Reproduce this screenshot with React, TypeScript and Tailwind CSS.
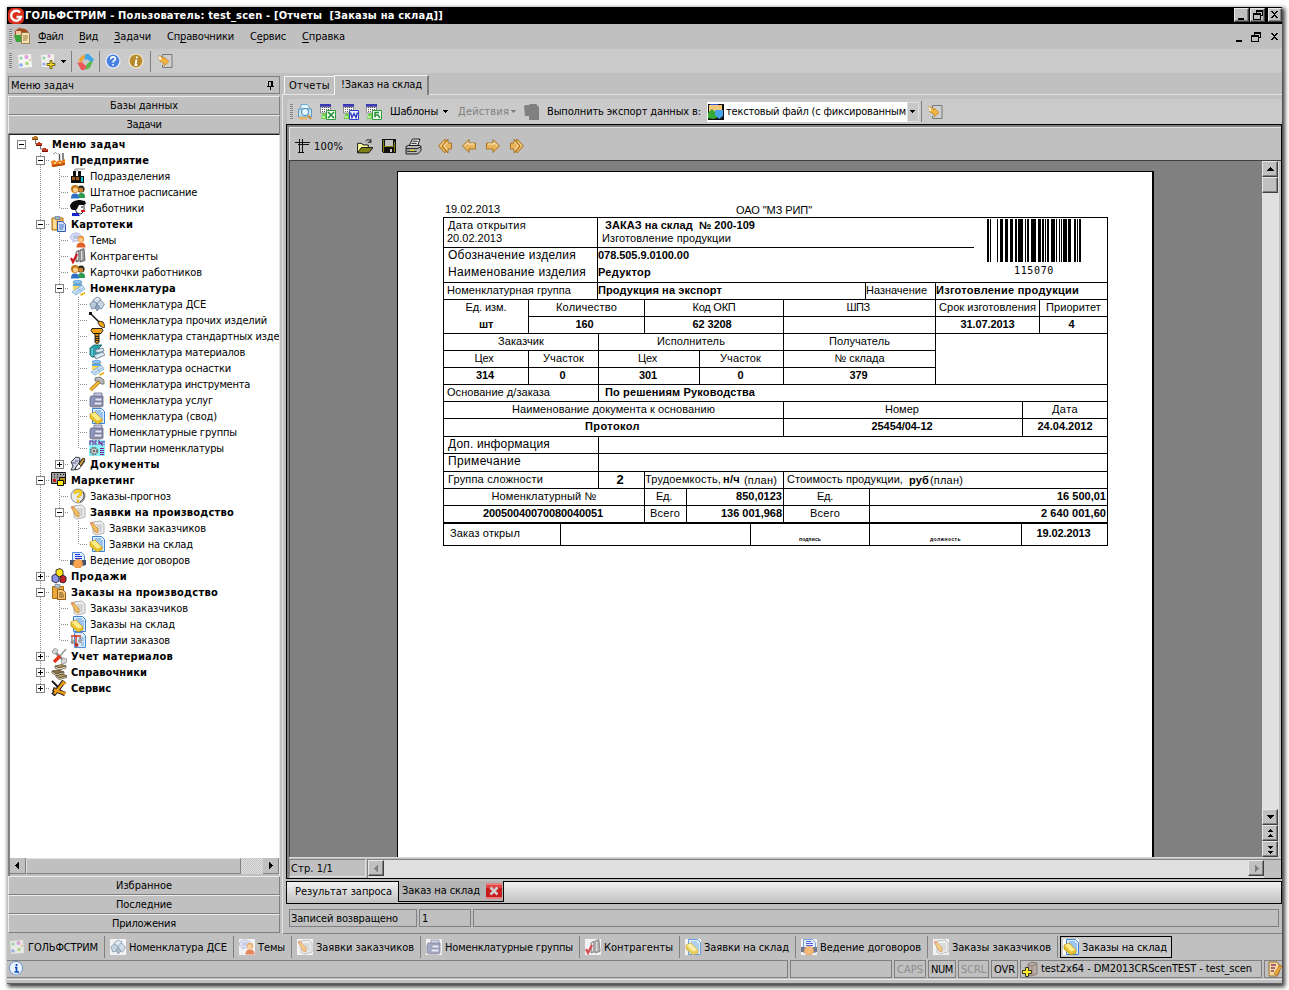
import { useLayoutEffect, useRef, type ReactNode } from "react";

/* ---------- text ---------- */

function T({ w, className = "", children }: { w: number; className?: string; children: ReactNode }) {
  const ref = useRef<HTMLSpanElement>(null);
  useLayoutEffect(() => {
    const el = ref.current;
    if (!el) return;
    el.style.letterSpacing = "0px";
    const natural = el.getBoundingClientRect().width;
    const count = (el.textContent ?? "").length || 1;
    el.style.letterSpacing = ((w - natural) / count).toFixed(3) + "px";
  }, [w]);
  return (
    <span ref={ref} className={"inline-block shrink-0 whitespace-pre " + className}>
      {children}
    </span>
  );
}

/* ---------- icons ---------- */

const sheet = (
  <g>
    <path d="M0 0h11v3H0z" fill="#3a3ab8" />
    <path d="M.5 3h10v6H.5z" fill="#fff" stroke="#8a8a8a" />
    <path d="M2.500 3v6M4.500 3v6M6.500 3v6M8.500 3v6" stroke="#555" strokeDasharray="1 1" />
    <path d="M3 9l4 1v5H1l1-4z" fill="#6cd048" />
    <path d="M2 12h3v2H2z" fill="#b4f09c" />
  </g>
);

const art: Record<string, ReactNode> = {
  flow: (
    <g>
      <path d="M3.500 4v4H6M8.500 9v4H11" fill="none" stroke="#777" />
      <path d="M0 1h6v3H0zM2 0h3v1H2z" fill="#b97a2c" />
      <path d="M4 7h6v3H4zM6 6h2v1H6zM10 13h6v3h-6zM11 12h3v1h-3z" fill="#c53a20" />
      <path d="M4 9.500h6M10 15.500h6" stroke="#7a1608" />
      <path d="M0 3.500h6" stroke="#7c4a0c" />
    </g>
  ),
  plant: (
    <g>
      <path d="M2 1l2 1M4 0l2 2M8 1L7 2" stroke="#999" />
      <path d="M8.500 2v7M12 1v8" stroke="#555" strokeWidth="1.400" />
      <path d="M0 9l4-1 1 2 4-2 1 1 4-2v6l-13 2z" fill="#ef7a1c" />
      <path d="M1 13l13-2v2L2 15z" fill="#b84c05" />
      <path d="M3 10.500h2v1.500H3zM8 10h2v1.500H8z" fill="#ffe28a" />
    </g>
  ),
  factory: (
    <g>
      <path d="M5 1h10M4 2h4" stroke="#c4c4c4" strokeWidth="2" />
      <path d="M3 3h3v5h2V3h3v5h3v7H1V8h2z" fill="#111" />
      <path d="M2 9h3v3H2zM6 9h3v3H6z" fill="#a45a12" />
      <path d="M11 9h2v5h-2z" fill="#0cc7d6" />
    </g>
  ),
  people: (
    <g>
      <circle cx="11" cy="5" r="3.600" fill="#2b2b1c" />
      <circle cx="11" cy="6" r="2.300" fill="#c98432" />
      <path d="M8 14c0-4 1-5 3.500-5S15 10 15 14z" fill="#2d9b50" />
      <circle cx="5" cy="5" r="4" fill="#c07b16" />
      <circle cx="5.500" cy="6" r="2.500" fill="#ffd08a" />
      <path d="M1 14.500c0-4 1.500-5 4-5s4 1 4 5z" fill="#2f6fc8" />
    </g>
  ),
  worker: (
    <g>
      <path d="M7 4h7v7l-3 3-4-1-2-4z" fill="#fff" stroke="#000" strokeWidth=".8" />
      <path d="M0 6C1 2 5 0 10 0l5 1 1 3-3 1-4 0-2 4-1 1H3L1 9z" fill="#0a0a0a" />
      <path d="M11 10h4v2h-4z" fill="#e01818" />
      <path d="M2 13h6l2 3H2z" fill="#1623c8" />
      <path d="M11 7h2" stroke="#000" />
    </g>
  ),
  clipboard: (
    <g>
      <path d="M1 2h11v12H1z" fill="#f5b551" stroke="#b06c12" />
      <path d="M2 3h3v10H2z" fill="#ffdc98" />
      <path d="M4 .5h5V3.500H4z" fill="#9fb2c8" stroke="#65788e" strokeWidth=".7" />
      <path d="M6.500 5.500h5l3 3v7h-8z" fill="#cfe0fb" stroke="#3458a8" />
      <path d="M8 9h5M8 11h5M8 13h4" stroke="#4a70c0" />
    </g>
  ),
  theme: (
    <g>
      <ellipse cx="6" cy="5" rx="5.500" ry="4" fill="#dfe3f6" stroke="#a9b2dc" />
      <path d="M3 8l-1 3 4-2z" fill="#c3caea" />
      <path d="M3 4h6M3 6h5" stroke="#9aa5d8" />
      <circle cx="11" cy="7" r="3.200" fill="#e8963c" />
      <circle cx="10.700" cy="7.700" r="2.200" fill="#ffc98c" />
      <path d="M6.500 15.500c0-4 2-5 4.500-5s4.500 1 4.500 5z" fill="#e4602a" />
    </g>
  ),
  agents: (
    <g>
      <path d="M6 4l3-2v11l-3 1zM10 2l4-1.500 1 12-5 1.500z" fill="#9a9a9a" stroke="#555" strokeWidth=".8" />
      <path d="M7.500 4v8M11.500 3v9" stroke="#dedede" strokeWidth="1.400" />
      <path d="M1 10l2 4 4-8" fill="none" stroke="#cf1722" strokeWidth="2.200" />
    </g>
  ),
  nomen: (
    <g>
      <path d="M3 2h9v8H3z" fill="#ffd75a" />
      <ellipse cx="7.500" cy="2" rx="4.500" ry="1.600" fill="#8cc8ff" stroke="#3f85c8" strokeWidth=".7" />
      <path d="M3 4h9v2H3z" fill="#5aa5e8" />
      <path d="M2 12l10-7 3 4-9 6z" fill="#d3e6f7" stroke="#6ea2cf" strokeWidth=".8" />
      <path d="M5 13l8-5M8 8l3 4" stroke="#8cb8de" />
      <path d="M10 14l5-2v2l-4 2z" fill="#e9b72b" />
    </g>
  ),
  dse: (
    <g stroke="#68809a" strokeWidth=".8">
      <path d="M4 4l4-3 4 2-1 4-4 1z" fill="#dce6f0" />
      <path d="M.8 8l3-3 4 2-1 5-4 1z" fill="#b8c8d8" />
      <path d="M8 8l3-4 4.500 4-3 5-4-1z" fill="#c9d6e3" />
      <path d="M6 11l3-2 2 3-3 3z" fill="#93a9c0" />
    </g>
  ),
  screw: (
    <g>
      <path d="M1 1l10 10" stroke="#111" strokeWidth="1.400" />
      <path d="M0 0h3v3H0z" fill="#111" />
      <path d="M10 9l4 1 2 4-1 2-4-2-2-3z" fill="#f0a41a" stroke="#111" strokeWidth=".8" />
    </g>
  ),
  bolt: (
    <g>
      <path d="M3 .5h10l1 2-2 3H4l-2-3z" fill="#f0a41a" stroke="#111" strokeWidth=".9" />
      <path d="M6 5.500h4v9l-2 1-2-1z" fill="#d98a10" stroke="#111" strokeWidth=".9" />
      <path d="M6 8.500h4M6 10.500h4M6 12.500h4" stroke="#111" strokeWidth=".8" />
    </g>
  ),
  material: (
    <g>
      <path d="M1 4l4-3h8l-3 3v9H3l-2-2z" fill="#2ba0a8" stroke="#0b5660" strokeWidth=".8" />
      <path d="M6 6l8-2 1 3-7 2zM5 11l9-3 2 3-9 4z" fill="#dbe9f2" stroke="#60788c" strokeWidth=".8" />
      <path d="M3 4v8" stroke="#8de4e8" />
    </g>
  ),
  hammer: (
    <g>
      <path d="M1.500 14L11 5" stroke="#a86c0a" strokeWidth="3.600" />
      <path d="M1.500 14L11 5" stroke="#f2c032" strokeWidth="2.200" />
      <path d="M6 2l5-1 4 3v4h-3l-2-3H6z" fill="#b9b9b9" stroke="#666" strokeWidth=".8" />
    </g>
  ),
  service: (
    <g>
      <path d="M5 1h8v4H5z" fill="#c9cde0" stroke="#666c90" strokeWidth=".8" />
      <path d="M2 4h12v10l-2 1H3l-2-1V6z" fill="#8f95b8" stroke="#5d628a" strokeWidth=".8" />
      <path d="M6 6h7v3H6zM5 10h8v3H5z" fill="#e2e5f2" stroke="#6a6f94" strokeWidth=".7" />
      <path d="M2 14.500h11" stroke="#8b8b90" />
    </g>
  ),
  svod: (
    <g>
      <path d="M3.500.5h9l3 3v12h-12z" fill="#dcecfc" stroke="#3b82cf" />
      <path d="M6 3h6M6 5h8M8 7h6M10 9h4M12 11h2" stroke="#5d9ee0" />
      <path d="M1 6l5-2 7 7v3l-5 2-7-6z" fill="#e8c22e" stroke="#b98d12" strokeWidth=".7" />
      <path d="M1.500 6l4.500-1.500 6.500 6.500-4.500 1.500z" fill="#fdee8c" />
    </g>
  ),
  parts: (
    <g>
      <path d="M0 0h16v16H0z" fill="#8af4f8" />
      <path d="M1 5V1h3v4M8 1H6v3h2M10 5V1l3 4V1M15 1v2M15 4v1" fill="none" stroke="#7a1e96" strokeWidth="1.100" />
      <circle cx="5" cy="11" r="3.300" fill="#ddd" stroke="#6f7a80" strokeWidth="2" strokeDasharray="2 .6" />
      <circle cx="5" cy="11" r="1.300" fill="#666" />
      <path d="M11 8.500h4M11 10.500h4M11 12.500h4M11 14.500h4" stroke="#7a1e96" />
    </g>
  ),
  docs: (
    <g stroke="#111" strokeWidth=".8">
      <path d="M1 6l5-5 4 1-1 6-5 6H1l2-4z" fill="#cdd2ea" />
      <path d="M6 11l6-8 3 2-6 8-4 1z" fill="#fff" />
      <path d="M9 8l4-6 2 1-4 7z" fill="#d8a13a" />
      <path d="M2 7h4M5 5h3" stroke="#445" />
    </g>
  ),
  market: (
    <g>
      <path d="M.5.5h14v11H.5z" fill="#a0a0a0" stroke="#111" />
      <path d="M3 2.500h1M6 2.500h1M9 2.500h1M12 2.500h1M3 5h1M6 5h1" stroke="#111" />
      <path d="M2 7h3v3H2z" fill="#d81414" />
      <path d="M8.500 5.500h6v6h-6z" fill="#b98e12" stroke="#111" />
      <path d="M6.500 8.500h6v5h-6z" fill="#ffec19" stroke="#111" />
    </g>
  ),
  question: (
    <g>
      <circle cx="8" cy="8" r="7" fill="#ececec" stroke="#8b8b8b" />
      <path d="M13 4a7 7 0 0 1-3 10" fill="none" stroke="#333" />
      <path d="M5 6c0-4 6-4 6-.8C11 7.500 8 7.500 8 10" fill="none" stroke="#c89406" strokeWidth="2.600" />
      <path d="M5 6c0-4 6-4 6-.8C11 7.500 8 7.500 8 10" fill="none" stroke="#ffdc1c" strokeWidth="1.600" />
      <circle cx="8" cy="13" r="1.400" fill="#f2c20e" />
    </g>
  ),
  request: (
    <g>
      <path d="M4 2l8-1 3 3v9l-8 2-3-2z" fill="#efefef" stroke="#b0b0b0" />
      <path d="M7 5h6M8 7h5M9 9h4M10 11h3" stroke="#b8b8b8" />
      <path d="M1 3l2-1 6 7 0 4-3-1z" fill="#f6bd62" stroke="#bd7f2c" strokeWidth=".7" />
      <path d="M1 3l2-1 1 1.500-2 1z" fill="#e98b8b" />
    </g>
  ),
  contract: (
    <g>
      <path d="M2.500.5h9l3 3v10h-12z" fill="#e4efff" stroke="#4f86d8" />
      <path d="M5 2.500h5M5 4.500h7M5 6.500h7" stroke="#1c2fe0" />
      <path d="M0 8h5v5H0zM12 8h4v5h-4z" fill="#47536a" />
      <path d="M4 9l4-2 4 2 1 4-3 3H6l-3-3z" fill="#f7a552" stroke="#d07820" strokeWidth=".6" />
    </g>
  ),
  sales: (
    <g stroke="#111" strokeWidth=".8">
      <path d="M5 2l4-1.500 3 2v5L8 9 5 7z" fill="#ffe11c" />
      <path d="M1 8l3-2 4 3v4l-3 2-4-2z" fill="#8b93e8" />
      <path d="M9 9l3-2 3 2v4l-2 2-4-1z" fill="#c5202c" />
    </g>
  ),
  orders: (
    <g>
      <path d="M1.500 2.500h11v12h-11z" fill="#eda93c" stroke="#a86a14" />
      <path d="M4 .5h5V4H4z" fill="#b4c0cc" stroke="#71808e" strokeWidth=".7" />
      <path d="M6.500 5.500h5l3 3v7h-8z" fill="#f4c878" stroke="#94580e" />
      <path d="M8 9h4M8 11h5M8 13h5" stroke="#7f4e10" />
    </g>
  ),
  batch: (
    <g>
      <path d="M4.500.5h8l3 3v12h-11z" fill="#dcecfc" stroke="#4c8fd8" />
      <path d="M10 6h4M10 8h4M11 11h3M11 13h3" stroke="#6f9fd6" />
      <path d="M1 4h10M6 3v10" stroke="#d4311f" strokeWidth="1.300" />
      <path d="M2 5v4M10 5v4" stroke="#555" />
      <circle cx="2.500" cy="10" r="2" fill="#9a9a9a" />
      <circle cx="6.500" cy="13" r="2" fill="#b23a2c" />
      <circle cx="10" cy="9" r="2" fill="#a5a5a5" />
    </g>
  ),
  tools: (
    <g>
      <path d="M2 2l12 12" stroke="#8f8f8f" strokeWidth="2.600" />
      <path d="M1 4l3-4 3 2-1 3-3 1zM10 13l2-3 4 1-1 4-4 1z" fill="#d8d8d8" stroke="#8a8a8a" strokeWidth=".7" />
      <path d="M15 1L9 8" stroke="#999" strokeWidth="1.600" />
      <path d="M9 8l-6 6" stroke="#e8351c" strokeWidth="3.400" />
    </g>
  ),
  books: (
    <g stroke="#4a3c22" strokeWidth=".7">
      <path d="M5 11l7-1 4 2-8 2z" fill="#b79a5a" />
      <path d="M5 11v2l3 2.500 8-2V12l-8 2z" fill="#f6f0dc" />
      <path d="M1 7l7-1 5 2-8 2z" fill="#8a7442" />
      <path d="M1 7v2l4 2.500 8-2V8l-8 2z" fill="#f6f0dc" />
      <path d="M4 2l7-1.500 4 1.500-7 2z" fill="#b79a5a" />
      <path d="M4 2v2l4 2 7-2V2L8 4z" fill="#f6f0dc" />
    </g>
  ),
  gear: (
    <g>
      <path d="M1 1l8 8" stroke="#111" strokeWidth="1.800" />
      <path d="M13 1L8 8l-6 7M2 9l12 5" stroke="#111" strokeWidth="4.400" />
      <path d="M13 1.500L8 8l-5 6M3 9.500l10 4" stroke="#ec9a1c" strokeWidth="2.600" />
      <path d="M11 2l2 2 2-1M12 12l2 1-1 2" fill="none" stroke="#ec9a1c" strokeWidth="1.600" />
    </g>
  ),
  dots: (
    <g>
      <path d="M1 2l13-1 1 13-13 1z" fill="#f4f4f0" />
      <circle cx="4" cy="5" r="1.500" fill="#8cd0a0" />
      <circle cx="9.500" cy="4" r="2" fill="#e39be0" />
      <circle cx="4" cy="12" r="1.800" fill="#8aaaf0" />
      <circle cx="10" cy="10.500" r="1.800" fill="#a8dc7c" />
      <circle cx="13" cy="7" r="1" fill="#d8c080" />
    </g>
  ),
  dotsAdd: (
    <g>
      <path d="M1 2l13-1 0 7-5 6-7 0z" fill="#f1f1ec" />
      <circle cx="4" cy="5" r="1.500" fill="#8cd0a0" />
      <circle cx="9" cy="3" r="1.600" fill="#e39be0" />
      <circle cx="4" cy="11" r="1.500" fill="#8aaaf0" />
      <path d="M10 7.500h2v3h3v2h-3v3h-2v-3H7v-2h3z" fill="#f4dc2c" stroke="#6d5a08" strokeWidth=".9" />
    </g>
  ),
  cycle: (
    <g>
      <path d="M1 7l4-5 5 0-5 5v3z" fill="#f2a23a" />
      <path d="M8 1h3l5 5-2 3-4-3H7z" fill="#3fa8e8" />
      <path d="M15 8l-3 6-4 2 0-4 4-4z" fill="#58b84a" />
      <path d="M0 9l5 0 4 4-2 3-3 0z" fill="#ee5858" />
    </g>
  ),
  help: (
    <g>
      <circle cx="8" cy="8" r="7" fill="#4a80e0" stroke="#e8f0ff" strokeWidth="1.200" />
      <path d="M5.800 6.200c0-3 4.600-3 4.600-.4C10.400 7.500 8 7.500 8 9.500M8 11v1.500" fill="none" stroke="#fff" strokeWidth="1.600" />
    </g>
  ),
  info: (
    <g>
      <circle cx="8" cy="8" r="7" fill="#b88a2c" stroke="#f4ead0" strokeWidth="1.200" />
      <path d="M8.800 3.500v1.800M8.500 6.500l-1 5.500h1.800" fill="none" stroke="#fff" strokeWidth="1.800" />
    </g>
  ),
  exit: (
    <g>
      <path d="M5.500 4V1.500h9.500v13H5.500V12" fill="#cfcfcf" stroke="#777" />
      <path d="M1 3l3 0 3 3V4l5 4.500L7 13v-3L3 8z" fill="#f5b640" stroke="#b98120" strokeWidth=".7" />
      <path d="M1 3l3 1 0 3-1.500 0z" fill="#f8f4ea" />
    </g>
  ),
  preview: (
    <g>
      <path d="M4 .5h6l2 2v6H4z" fill="#eaf6ff" stroke="#4aa0c8" strokeWidth=".8" />
      <path d="M1.500 5h13v8h-13z" fill="#c4e4f4" stroke="#468cae" strokeWidth=".8" />
      <path d="M2 13h8v2.500H2z" fill="#e8b060" />
      <circle cx="8" cy="8" r="3.600" fill="#e6f7ff" stroke="#3f87b4" />
      <path d="M11 11l3 4" stroke="#d08830" strokeWidth="2" />
    </g>
  ),
  xls: (
    <g>
      {sheet}
      <path d="M6.500 6.500h9v9h-9z" fill="#f4fff4" stroke="#2d9a3c" />
      <path d="M8 8l6 6M14 8l-6 6" stroke="#218c34" strokeWidth="1.600" />
    </g>
  ),
  doc: (
    <g>
      {sheet}
      <path d="M6.500 6.500h9v9h-9z" fill="#f4f4ff" stroke="#3040c8" />
      <path d="M7.500 8.500l1.500 5 2-4 2 4 1.500-5" fill="none" stroke="#2030c0" strokeWidth="1.300" />
    </g>
  ),
  txt: (
    <g>
      {sheet}
      <path d="M6.500 6.500h9v9h-9z" fill="#f4fff4" stroke="#2d9a3c" />
      <path d="M13 8.500H9v5M9 11h3l2 3" fill="none" stroke="#218c34" strokeWidth="1.400" />
    </g>
  ),
  blob: <path d="M0 2l2-1h3l1-1h6l3 3v13H5v-4H1z" fill="#808080" />,
  picture: (
    <g>
      <path d="M0 0h16v16H0z" fill="#111" />
      <path d="M1 1h13v9H1z" fill="#f1c87a" />
      <path d="M2 0h8v1H2z" fill="#3a55d8" />
      <path d="M0 9l4-4 4 4 1 5-4 1-5-1z" fill="#38a834" />
      <path d="M7 6h8v6l-4 3-4-4z" fill="#48a4e8" />
    </g>
  ),
  zoomCross: (
    <g stroke="#111" fill="none" shapeRendering="crispEdges">
      <path d="M4.500 1v13M7.500 1v13M0 4.500h15M3 6.500h11M3 14.500h6" />
    </g>
  ),
  open: (
    <g stroke="#111" strokeWidth=".9">
      <path d="M1.500 14V5h4l1 1.500h5V9" fill="#ffffa0" />
      <path d="M1.500 14L5 9h11l-4 5z" fill="#808018" />
      <path d="M9 3c2-2 4-2 5 1M14 1v3h-3" fill="none" />
    </g>
  ),
  save: (
    <g shapeRendering="crispEdges">
      <path d="M1 1h14v14H2l-1-1z" fill="#111" />
      <path d="M4 2h8v6H4z" fill="#c4c4c4" />
      <path d="M2 2h1v12H2zM13 4h1v10h-1zM3 8h10v1H3z" fill="#808018" />
      <path d="M9 11h2v3H9z" fill="#c8c8c8" />
    </g>
  ),
  print: (
    <g stroke="#111" strokeWidth=".9">
      <path d="M4 7l3-6h7l-2 6z" fill="#fff" />
      <path d="M7 3h5M6 5h5" />
      <path d="M1 8l2-1h11l1 1v4l-3 3H1z" fill="#b8b8b8" />
      <path d="M1 10h11l3-2M2 12.500h9" fill="none" />
      <path d="M5 11.500h4" stroke="#e8e020" strokeWidth="1.200" />
    </g>
  ),
  first: (
    <g fill="#e9b35a" stroke="#9a6412" strokeWidth=".8">
      <path d="M11 1L5 8l6 7V11h3.500V5H11z" />
      <path d="M8 1L1.500 8 8 15l1-2-4-5 4-5z" />
      <path d="M10.500 4L7 8l3.500 4M7 4L3.500 8" fill="none" stroke="#fff0cc" />
    </g>
  ),
  prev: (
    <g>
      <path d="M1.500 8l6.500-6.500V5h6.500v6H8v3.500z" fill="#e9b35a" stroke="#9a6412" strokeWidth=".8" />
      <path d="M3.500 8L7 4.500V6h6" fill="none" stroke="#fff0cc" />
    </g>
  ),
  dbAdd: (
    <g>
      <path d="M6 3l4-2 5 1v11l-5 2-4-1z" fill="#b9a9a0" stroke="#776a64" strokeWidth=".8" />
      <path d="M10 4v10M6 4l4 1 5-2" fill="none" stroke="#8f827c" />
      <path d="M3.500 6.500h3v3h3v3h-3v3h-3v-3h-3v-3h3z" fill="#ffee2a" stroke="#222" strokeWidth=".9" />
    </g>
  ),
  note: (
    <g>
      <path d="M3 1h8l2 2v9l-2 3H3z" fill="#f3d896" stroke="#94642c" strokeWidth=".9" />
      <path d="M5 4h5M5 7h4M5 10h3" stroke="#8c3c78" strokeWidth="1.300" />
      <path d="M8 13l6-9 2 1-5 9z" fill="#f0a63a" stroke="#9c5c12" strokeWidth=".6" />
    </g>
  ),
  bubble: (
    <g>
      <circle cx="8" cy="7" r="6.600" fill="#e9f2ff" stroke="#6d93c4" />
      <path d="M5 13l3 3 2-3z" fill="#a9c2e2" />
      <path d="M8.500 3v2M7 6.500h1.500V11M6.500 11H11" fill="none" stroke="#0c46b8" strokeWidth="1.700" />
    </g>
  ),
  app: (
    <g>
      <path d="M1 3l4-3 6 1 3 2v5H1z" fill="#a04c20" />
      <path d="M0 7h7v7H2z" fill="#3da43a" />
      <path d="M2 3h5v4H2z" fill="#f3c9a0" />
      <path d="M7.500 4.500h7l1 2v9h-8z" fill="#f2e2b8" stroke="#8d6b28" strokeWidth=".8" />
      <path d="M9 8h5M9 10h5M9 12h4" stroke="#9a7a34" />
    </g>
  ),
};

function Icon({ n, flip = false, className = "h-4 w-4" }: { n: string; flip?: boolean; className?: string }) {
  return (
    <svg viewBox="0 0 16 16" className={"h-4 w-4 shrink-0 " + (flip ? "-scale-x-100 " : "") + className}>
      {art[n]}
    </svg>
  );
}

function Tri({ dir, className = "" }: { dir: "up" | "down" | "left" | "right"; className?: string }) {
  const d = {
    up: "M4 2h1v1h1v1h1v1h1v1H1V5h1V4h1V3h1z",
    down: "M1 2h7v1H7v1H6v1H5v1H4V5H3V4H2V3H1z",
    left: "M6 1v7H5V7H4V6H3V5H2V4h1V3h1V2h1V1z",
    right: "M3 1v7h1V7h1V6h1V5h1V4H6V3H5V2H4V1z",
  }[dir];
  return (
    <svg viewBox="0 0 9 9" className={"h-[9px] w-[9px] shrink-0 " + className} shapeRendering="crispEdges">
      <path d={d} fill="currentColor" />
    </svg>
  );
}

// Small arrow of a drop-down button: five pixels wide, three high.
function Drop({ className = "" }: { className?: string }) {
  return (
    <svg viewBox="0 0 5 3" className={"h-[3px] w-[5px] shrink-0 " + className} shapeRendering="crispEdges">
      <path d="M0 0h5v1H4v1H3v1H2V2H1V1H0z" fill="currentColor" />
    </svg>
  );
}

const raised =
  "flex shrink-0 items-center justify-center border border-t-[#e8e8e8] border-l-[#e8e8e8] border-r-[#404040] border-b-[#404040] bg-[#c0c0c0] shadow-[inset_-1px_-1px_0_#808080]";

function Grip() {
  return <div className="h-4 w-[3px] shrink-0 bg-[repeating-linear-gradient(180deg,#808080_0_1px,#d0d0d0_1px_2px)]" />;
}

function Sep({ className = "" }: { className?: string }) {
  return <div className={"w-px shrink-0 bg-[#808080] " + className} />;
}

/* ---------- window frame ---------- */

const glyph = {
  min: "M2 9h6v2H2z",
  restore: "M4 1h7v6H9v4H1V4h3zM5 3v1h4v2h1V3zM2 6v4h6V6z",
  close: "M2 2h2v1h1v1h1V3h1V2h2v1H8v1H7v1H6v1h1v1h1v1h1v1H7V8H6V7H5v1H4v1H2V8h1V7h1V6h1V5H4V4H3V3H2z",
};

function Glyph({ k }: { k: keyof typeof glyph }) {
  return (
    <svg viewBox="0 0 12 12" className="h-3 w-3 shrink-0" shapeRendering="crispEdges">
      <path d={glyph[k]} fillRule="evenodd" fill="#000" />
    </svg>
  );
}

function TitleBar() {
  return (
    <div className="flex h-[17px] shrink-0 items-center bg-black text-white">
      <svg viewBox="0 0 16 16" className="ml-[1px] h-4 w-4 shrink-0">
        <rect width="16" height="16" rx="5" fill="#d8301c" />
        <path d="M12 4.500A5 5 0 1 0 13 9H8.500" fill="none" stroke="#fff" strokeWidth="2.400" />
      </svg>
      <T w={418} className="ml-[1px] font-bold">
        ГОЛЬФСТРИМ - Пользователь: test_scen - [Отчеты  [Заказы на склад]]
      </T>
      <div className="mt-[1px] ml-auto flex self-start">
        <div className={raised + " h-[14px] w-[15px] overflow-hidden"}><Glyph k="min" /></div>
        <div className={raised + " ml-px h-[14px] w-[15px] overflow-hidden"}><Glyph k="restore" /></div>
        <div className={raised + " ml-[3px] h-[14px] w-[14px] overflow-hidden"}><Glyph k="close" /></div>
      </div>
    </div>
  );
}

const menu: [string, string, string, number][] = [
  ["", "Ф", "айл", 25],
  ["", "В", "ид", 19],
  ["", "З", "адачи", 37],
  ["Сп", "р", "авочники", 67],
  ["С", "е", "рвис", 36],
  ["", "С", "правка", 43],
];

function MenuBar() {
  return (
    <div className="flex h-[25px] shrink-0 items-center pl-[2px]">
      <Grip />
      <Icon n="app" className="mr-[8px] ml-[2px] -translate-y-px" />
      {menu.map(([a, u, b, w]) => (
        <T key={u + b} w={w} className="mr-4 pt-[1px]">
          {a}
          <span className="underline underline-offset-2">{u}</span>
          {b}
        </T>
      ))}
      <div className="ml-auto flex gap-[4px] pr-[1px]">
        <Glyph k="min" />
        <Glyph k="restore" />
        <span className="ml-[3px] flex"><Glyph k="close" /></span>
      </div>
    </div>
  );
}

function MainToolbar() {
  return (
    <div className="flex h-6 shrink-0 items-center bg-[#cacaca] pl-[2px]">
      <Grip />
      <Icon n="dots" className="ml-[5px]" />
      <Icon n="dotsAdd" className="ml-[7px]" />
      <Drop className="ml-[5px]" />
      <Sep className="mr-[5px] ml-[5px] h-[21px]" />
      <Icon n="cycle" className="h-[17px] w-[17px]" />
      <Sep className="mr-[5px] ml-[5px] h-[21px]" />
      <Icon n="help" />
      <Icon n="info" className="ml-[7px]" />
      <Sep className="mr-[6px] ml-[6px] h-[21px]" />
      <Icon n="exit" />
    </div>
  );
}

/* ---------- task tree ---------- */

type Node = { t: string; w: number; i: string; b?: boolean; open?: boolean; kids?: Node[] };

const tree: Node[] = [
  { t: "Предприятие", w: 78, i: "plant", b: true, open: true, kids: [
    { t: "Подразделения", w: 80, i: "factory" },
    { t: "Штатное расписание", w: 107, i: "people" },
    { t: "Работники", w: 54, i: "worker" },
  ] },
  { t: "Картотеки", w: 62, i: "clipboard", b: true, open: true, kids: [
    { t: "Темы", w: 26, i: "theme" },
    { t: "Контрагенты", w: 68, i: "agents" },
    { t: "Карточки работников", w: 112, i: "people" },
    { t: "Номенклатура", w: 86, i: "nomen", b: true, open: true, kids: [
      { t: "Номенклатура ДСЕ", w: 97, i: "dse" },
      { t: "Номенклатура прочих изделий", w: 158, i: "screw" },
      { t: "Номенклатура стандартных изделий", w: 189, i: "bolt" },
      { t: "Номенклатура материалов", w: 136, i: "material" },
      { t: "Номенклатура оснастки", w: 122, i: "nomen" },
      { t: "Номенклатура инструмента", w: 141, i: "hammer" },
      { t: "Номенклатура услуг", w: 104, i: "service" },
      { t: "Номенклатура (свод)", w: 108, i: "svod" },
      { t: "Номенклатурные группы", w: 128, i: "service" },
      { t: "Партии номенклатуры", w: 115, i: "parts" },
    ] },
    { t: "Документы", w: 70, i: "docs", b: true, open: false },
  ] },
  { t: "Маркетинг", w: 64, i: "market", b: true, open: true, kids: [
    { t: "Заказы-прогноз", w: 81, i: "question" },
    { t: "Заявки на производство", w: 144, i: "request", b: true, open: true, kids: [
      { t: "Заявки заказчиков", w: 97, i: "request" },
      { t: "Заявки на склад", w: 84, i: "svod" },
    ] },
    { t: "Ведение договоров", w: 100, i: "contract" },
  ] },
  { t: "Продажи", w: 56, i: "sales", b: true, open: false },
  { t: "Заказы на производство", w: 147, i: "orders", b: true, open: true, kids: [
    { t: "Заказы заказчиков", w: 98, i: "request" },
    { t: "Заказы на склад", w: 85, i: "svod" },
    { t: "Партии заказов", w: 80, i: "batch" },
  ] },
  { t: "Учет материалов", w: 102, i: "tools", b: true, open: false },
  { t: "Справочники", w: 76, i: "books", b: true, open: false },
  { t: "Сервис", w: 40, i: "gear", b: true, open: false },
];

function Box({ open }: { open: boolean }) {
  return (
    <svg viewBox="0 0 9 9" className="absolute top-[3px] left-[5px] h-[9px] w-[9px]" shapeRendering="crispEdges">
      <path d="M0 0h9v9H0z" fill="#808080" />
      <path d="M1 1h7v7H1z" fill="#fff" />
      <path d={open ? "M2 4h5v1H2z" : "M2 4h5v1H2zM4 2h1v5H4z"} fill="#000" />
    </svg>
  );
}

const vline = "w-px bg-[repeating-linear-gradient(180deg,#909090_0_1px,transparent_1px_2px)] ";

function Rows({ nodes, trail }: { nodes: Node[]; trail: boolean[] }) {
  return (
    <>
      {nodes.map((n, k) => {
        const last = k === nodes.length - 1;
        return (
          <div key={n.t}>
            <div className="flex h-4 items-center">
              {trail.map((on, j) => (
                <div key={j} className="h-4 w-[19px] shrink-0 pl-[9px]">
                  {on && <div className={vline + "h-4"} />}
                </div>
              ))}
              <div className="relative h-4 w-[19px] shrink-0 pl-[9px]">
                <div className={vline + (last ? "h-2" : "h-4")} />
                <div className="absolute top-[7px] left-[10px] h-px w-[9px] bg-[repeating-linear-gradient(90deg,transparent_0_1px,#909090_1px_2px)]" />
                {n.open !== undefined && <Box open={n.open} />}
              </div>
              <Icon n={n.i} className="ml-[1px] -translate-y-px" />
              <T w={n.w} className={"ml-[4px] " + (n.b ? "font-bold" : "")}>{n.t}</T>
            </div>
            {n.kids && <Rows nodes={n.kids} trail={[...trail, !last]} />}
          </div>
        );
      })}
    </>
  );
}

function Fold({ w, children }: { w: number; children: string }) {
  return (
    <div className="flex h-[19px] shrink-0 items-center justify-center border border-t-[#ececec] border-r-[#808080] border-b-[#808080] border-l-[#ececec] pt-[1px]">
      <T w={w}>{children}</T>
    </div>
  );
}

function Sidebar() {
  return (
    <div className="flex w-[272px] shrink-0 flex-col pt-[3px]">
      <div className="mb-[2px] flex h-[18px] shrink-0 items-center justify-between border border-[#808080] pt-[1px] pr-[4px] pl-[2px]">
        <T w={63}>Меню задач</T>
        <svg viewBox="0 0 9 9" className="h-[9px] w-[9px]" shapeRendering="crispEdges">
          <path d="M2 0h5v5h1v1H5v3H4V6H1V5h1zM3 1v4h2V1z" fillRule="evenodd" />
        </svg>
      </div>
      <Fold w={68}>Базы данных</Fold>
      <Fold w={35}>Задачи</Fold>
      <div className="flex min-h-0 flex-1 flex-col border-t border-r border-l-2 border-t-[#202020] border-r-[#e4e4e4] border-l-[#808080] bg-white">
        <div className="min-h-0 flex-1 overflow-hidden pt-[2px] pl-[2px]">
          <div className="flex h-4 items-center">
            <div className="relative h-4 w-[19px] shrink-0"><Box open /></div>
            <Icon n="flow" className="ml-[1px] -translate-y-px" />
            <T w={74} className="ml-[4px] font-bold">Меню задач</T>
          </div>
          <div className="pl-[19px]">
            <Rows nodes={tree} trail={[]} />
          </div>
        </div>
        <div className="flex h-4 shrink-0 bg-[repeating-conic-gradient(#e2e2e2_0_25%,#c0c0c0_0_50%)] bg-[length:2px_2px]">
          <div className="flex h-4 w-4 items-center justify-center border-r border-b border-[#808080] bg-[#c0c0c0]"><Tri dir="left" /></div>
          <div className="h-4 w-[215px] border border-t-[#e0e0e0] border-r-[#808080] border-b-[#808080] border-l-[#e0e0e0] bg-[#c0c0c0]" />
          <div className="ml-auto flex h-4 w-4 items-center justify-center border-r border-b border-[#808080] bg-[#c0c0c0]"><Tri dir="right" /></div>
        </div>
        <div className="h-[2px] bg-[#c0c0c0]" />
      </div>
      <Fold w={56}>Избранное</Fold>
      <Fold w={56}>Последние</Fold>
      <Fold w={64}>Приложения</Fold>
      <div className="h-[1px] shrink-0" />
    </div>
  );
}

/* ---------- report form ---------- */

type CellProps = {
  c: string;
  t?: string;
  w?: number;
  b?: boolean;
  side?: string;
  children?: ReactNode;
};

function Cell({ c, t, w = 0, b = false, side = "justify-center", children }: CellProps) {
  return (
    <div className={"flex shrink-0 items-center border-r border-b border-black pb-[2px] " + side + " " + c}>
      {t && <T w={w} className={b ? "font-bold" : ""}>{t}</T>}
      {children}
    </div>
  );
}

const left4 = "justify-start pl-[3px]";

const bars: [number, number][] = [
  [0, 2], [3, 1], [10, 1], [13, 3], [18, 3], [23, 3], [28, 2], [31, 5], [38, 1], [40, 2], [44, 5],
  [51, 3], [55, 2], [58, 1], [60, 2], [64, 4], [69, 1], [72, 1], [74, 1], [76, 4], [81, 3], [87, 2], [90, 1], [92, 2],
];

function Form() {
  return (
    <div className="w-[665px] border-t border-l border-black leading-[13px]">
      <div className="flex h-[65px] border-r border-b border-black">
        <div className="flex w-[154px] shrink-0 flex-col border-r border-black">
          <div className="flex h-[30px] flex-col border-b border-black pl-[3px]">
            <T w={78} className="ml-[1px] self-start pt-[1px]">Дата открытия</T>
            <T w={55} className="self-start">20.02.2013</T>
          </div>
          <T w={128} className="ml-[4px] self-start pt-[1px] text-[12px]">Обозначение изделия</T>
          <T w={138} className="ml-[4px] self-start pt-[4px] text-[12px]">Наименование изделия</T>
        </div>
        <div className="flex flex-1 flex-col">
          <div className="flex h-[30px] w-[376px] flex-col border-b border-black">
            <T w={150} className="ml-[7px] self-start pt-[1px] font-bold">ЗАКАЗ на склад  № 200-109</T>
            <T w={129} className="ml-[4px] self-start">Изготовление продукции</T>
          </div>
          <T w={91} className="self-start pt-[1px] font-bold">078.505.9.0100.00</T>
          <T w={53} className="self-start pt-[4px] font-bold">Редуктор</T>
        </div>
        <div className="flex w-[133px] shrink-0 flex-col items-start pl-[13px]">
          <svg viewBox="0 0 94 43" className="mt-[1px] h-[43px] w-[94px]" shapeRendering="crispEdges">
            {bars.map(([x, w]) => <rect key={x} x={x} width={w} height="43" />)}
          </svg>
          <T w={40} className="mt-[2px] ml-[27px] font-['DejaVu_Sans_Mono','Liberation_Mono',monospace] text-[10px]">115070</T>
        </div>
      </div>
      <div className="flex h-[17px]">
        <Cell c="w-[154px]" side="justify-start pl-[3px]" t="Номенклатурная группа" w={124} />
        <Cell c="w-[268px]" side="justify-start" t="Продукция на экспорт" w={124} b />
        <Cell c="w-[70px]" side="justify-start" t="Назначение" w={61} />
        <Cell c="w-[172px]" side="justify-start" t="Изготовление продукции" w={143} b />
      </div>
      <div className="flex h-[34px]">
        <div className="flex w-[85px] flex-col items-center border-r border-b border-black pt-[1px]">
          <T w={41}>Ед. изм.</T>
          <T w={14} className="mt-[4px] font-bold">шт</T>
        </div>
        <div className="w-[579px]">
          <div className="flex h-[17px]">
            <Cell c="w-[116px]" t="Количество" w={61} />
            <Cell c="w-[139px]" t="Код ОКП" w={43} />
            <Cell c="w-[152px]" side="justify-center pr-[3px]" t="ШПЗ" w={23} />
            <Cell c="w-[104px]" t="Срок изготовления" w={97} />
            <Cell c="w-[68px]" t="Приоритет" w={55} />
          </div>
          <div className="flex h-[17px]">
            <Cell c="w-[116px]" side="justify-center pr-1" t="160" w={18} b />
            <Cell c="w-[139px]" side="justify-center pr-1" t="62 3208" w={39} b />
            <Cell c="w-[152px]" />
            <Cell c="w-[104px]" t="31.07.2013" w={54} b />
            <Cell c="w-[68px]" side="justify-center pr-1" t="4" w={6} b />
          </div>
        </div>
      </div>
      <div className="flex h-[51px]">
        <div className="w-[492px]">
          <div className="flex h-[17px]">
            <Cell c="w-[155px]" t="Заказчик" w={46} />
            <Cell c="w-[185px]" t="Исполнитель" w={68} />
            <Cell c="w-[152px]" t="Получатель" w={61} />
          </div>
          <div className="flex h-[17px]">
            <Cell c="w-[85px]" side="justify-center pr-1" t="Цех" w={19} />
            <Cell c="w-[70px]" t="Участок" w={41} />
            <Cell c="w-[101px]" side="justify-center pr-[3px]" t="Цех" w={19} />
            <Cell c="w-[84px]" side="justify-center pr-[2px]" t="Участок" w={41} />
            <Cell c="w-[152px]" t="№ склада" w={50} />
          </div>
          <div className="flex h-[17px]">
            <Cell c="w-[85px]" side="justify-center pr-[2px]" t="314" w={18} b />
            <Cell c="w-[70px]" side="justify-center pr-[2px]" t="0" w={6} b />
            <Cell c="w-[101px]" side="justify-center pr-[2px]" t="301" w={18} b />
            <Cell c="w-[84px]" side="justify-center pr-[2px]" t="0" w={6} b />
            <Cell c="w-[152px]" side="justify-center pr-[2px]" t="379" w={18} b />
          </div>
        </div>
        <Cell c="w-[172px]" />
      </div>
      <div className="flex h-[17px]">
        <Cell c="w-[155px]" side={left4} t="Основание д/заказа" w={103} />
        <Cell c="w-[509px]" side="justify-start pl-[6px]" t="По решениям Руководства" w={150} b />
      </div>
      <div className="flex h-[17px]">
        <Cell c="w-[340px]" t="Наименование документа к основанию" w={203} />
        <Cell c="w-[239px]" side="justify-center pr-[2px]" t="Номер" w={34} />
        <Cell c="w-[85px]" t="Дата" w={26} />
      </div>
      <div className="flex h-[18px]">
        <Cell c="w-[340px]" side="justify-center pr-[2px]" t="Протокол" w={55} b />
        <Cell c="w-[239px]" side="justify-center pr-[2px]" t="25454/04-12" w={61} b />
        <Cell c="w-[85px]" t="24.04.2012" w={55} b />
      </div>
      <div className="flex h-[17px] text-[12px]">
        <Cell c="w-[155px]" side="justify-start pl-[4px]" t="Доп. информация" w={102} />
        <Cell c="w-[509px]" />
      </div>
      <div className="flex h-[18px] text-[12px]">
        <Cell c="w-[155px]" side="justify-start pl-[4px]" t="Примечание" w={73} />
        <Cell c="w-[509px]" />
      </div>
      <div className="flex h-[17px]">
        <Cell c="w-[155px]" side="justify-start pl-[4px]" t="Группа сложности" w={95} />
        <Cell c="w-[46px] text-[13px]" side="justify-center pr-[2px]" t="2" w={8} b />
        <Cell c="w-[139px]" side="justify-start">
          <T w={76}>Трудоемкость,</T>
          <T w={17} className="ml-[2px] font-bold">н/ч</T>
          <T w={33} className="ml-[4px] pt-[2px]">(план)</T>
        </Cell>
        <Cell c="w-[324px]" side={left4}>
          <T w={116}>Стоимость продукции,</T>
          <T w={20} className="ml-[6px] pt-[2px] font-bold">руб</T>
          <T w={33} className="ml-[1px] pt-[2px]">(план)</T>
        </Cell>
      </div>
      <div className="flex h-[17px]">
        <Cell c="w-[201px]" t="Номенклатурный №" w={105} />
        <Cell c="w-[42px]" side="justify-center pr-[3px]" t="Ед." w={16} />
        <Cell c="w-[97px]" side="justify-end pr-[1px]" t="850,0123" w={46} b />
        <Cell c="w-[86px]" side="justify-center pr-[3px]" t="Ед." w={16} />
        <Cell c="w-[238px]" side="justify-end pr-[1px]" t="16 500,01" w={49} b />
      </div>
      <div className="flex h-[18px] border-b border-black">
        <Cell c="w-[201px]" side="justify-center pr-[2px]" t="20050040070080040051" w={120} b />
        <Cell c="w-[42px]" side="justify-center pr-[1px]" t="Всего" w={30} />
        <Cell c="w-[97px]" side="justify-end pr-[1px]" t="136 001,968" w={61} b />
        <Cell c="w-[86px]" side="justify-center pr-[3px]" t="Всего" w={30} />
        <Cell c="w-[238px]" side="justify-end pr-[1px]" t="2 640 001,60" w={65} b />
      </div>
      <div className="flex h-[22px]">
        <Cell c="w-[117px]" side="justify-start pl-[6px]" t="Заказ открыл" w={70} />
        <Cell c="w-[190px]" />
        <Cell c="w-[119px] pt-[11px] text-[5px] leading-[5px]"><T w={22} className="font-bold">подпись</T></Cell>
        <Cell c="w-[152px] pt-[11px] text-[5px] leading-[5px]"><T w={31} className="font-bold">должность</T></Cell>
        <Cell c="w-[86px]" side="justify-center pr-[2px]" t="19.02.2013" w={54} b />
      </div>
    </div>
  );
}

/* ---------- report viewer ---------- */

function ViewerScroll() {
  return (
    <div className="flex w-[19px] shrink-0 flex-col border-r-2 border-[#c0c0c0] bg-[#e0e0e0]">
      <div className={raised + " h-4 w-4"}><Tri dir="up" /></div>
      <div className={raised + " h-4 w-4"} />
      <div className="flex-1" />
      <div className={raised + " h-4 w-4"}><Tri dir="down" /></div>
      {["M4 0h1v1h1v1h1v1H2V2h1V1h1zM4 5h1v1h1v1h1v1H2V7h1V6h1z", "M2 1h5v1H6v1H5v1H4V3H3V2H2zM2 6h5v1H6v1H5v1H4V8H3V7H2z"].map((d) => (
        <div key={d} className={raised + " h-4 w-4"}>
          <svg viewBox="0 0 9 9" className="h-[9px] w-[9px]" shapeRendering="crispEdges"><path d={d} /></svg>
        </div>
      ))}
    </div>
  );
}

function Viewer() {
  return (
    <div className="ml-[3px] flex h-[755px] w-[996px] shrink-0 flex-col border border-black">
      <div className="flex min-h-0 flex-1 flex-col border-t-2 border-l-2 border-[#808080]">
        <div className="flex h-[33px] shrink-0 items-center border-t border-l border-[#e4e4e4] pt-[4px] pl-[5px]">
          <Icon n="zoomCross" />
          <T w={29} className="ml-[3px] pt-[1px]">100%</T>
          <Icon n="open" className="ml-[13px] h-[17px] w-[17px]" />
          <Icon n="save" className="ml-[8px]" />
          <Icon n="print" className="ml-[8px] h-[17px] w-[17px]" />
          <Icon n="first" className="ml-[15px]" />
          <Icon n="prev" className="ml-[8px]" />
          <Icon n="prev" flip className="ml-[8px]" />
          <Icon n="first" flip className="ml-[8px]" />
        </div>
        <div className="flex min-h-0 flex-1 border-t border-l border-[#404040]">
          <div className="min-w-0 flex-1 overflow-hidden bg-[#808080] pt-[10px] pl-[107px]">
            <div className="h-[700px] w-[757px] border-t border-r-2 border-l border-black bg-white pl-[45px] font-['Liberation_Sans',Arial,sans-serif]">
              <div className="flex h-[45px] pt-[31px] leading-[13px]">
                <T w={55} className="ml-[2px]">19.02.2013</T>
                <T w={76} className="ml-[236px] pt-[1px]">ОАО "МЗ РИП"</T>
              </div>
              <Form />
            </div>
          </div>
          <ViewerScroll />
        </div>
        <div className="flex h-[21px] shrink-0 border-t border-[#d8d8d8]">
          <div className="mt-[1px] flex h-[18px] w-[77px] shrink-0 items-center border border-[#808080] border-r-[#e4e4e4] border-b-[#e4e4e4] pt-[1px] pl-[1px]">
            <T w={42}>Стр. 1/1</T>
          </div>
          <div className="mt-[1px] ml-[1px] flex h-[19px] flex-1 border-t border-l border-[#808080] bg-[#e0e0e0]">
            <div className={raised + " h-4 w-4 text-[#808080]"}><Tri dir="left" /></div>
            <div className="flex-1" />
            <div className={raised + " h-4 w-4 text-[#808080]"}><Tri dir="right" /></div>
            <div className="w-[17px] bg-[#c0c0c0]" />
          </div>
        </div>
      </div>
    </div>
  );
}

function ReportToolbar() {
  return (
    <div className="mt-[4px] ml-[4px] flex h-[25px] shrink-0 items-center rounded-sm bg-[#cacaca] pl-[3px]">
      <Grip />
      <Icon n="preview" className="ml-[4px]" />
      <Icon n="xls" className="ml-[7px]" />
      <Icon n="doc" className="ml-[7px]" />
      <Icon n="txt" className="ml-[7px]" />
      <T w={48} className="ml-[8px]">Шаблоны</T>
      <Drop className="ml-[5px]" />
      <T w={51} className="ml-[10px] text-[#808080]">Действия</T>
      <Drop className="ml-[2px] text-[#808080]" />
      <Icon n="blob" className="ml-[8px]" />
      <T w={154} className="ml-[7px]">Выполнить экспорт данных в:</T>
      <div className="ml-[6px] flex h-5 w-[212px] shrink-0 items-center bg-white pl-[1px]">
        <Icon n="picture" />
        <div className="ml-[2px] flex w-[180px] overflow-hidden">
          <T w={180}>текстовый файл (с фиксированным</T>
        </div>
        <div className="ml-auto flex h-5 w-3 items-center justify-center border border-[#dedede] bg-[#c6c6c6]">
          <Drop />
        </div>
      </div>
      <Sep className="mr-[5px] ml-[2px] h-[21px]" />
      <Icon n="exit" />
    </div>
  );
}

function Main() {
  return (
    <div className="ml-[2px] flex min-w-0 flex-1 flex-col">
      <div className="flex h-[22px] shrink-0 items-end border-b border-[#e4e4e4] pl-[2px]">
        <div className="flex h-[18px] w-[50px] shrink-0 items-center border-t border-l border-[#f4f4f4] pt-[1px] pl-[4px]">
          <T w={41}>Отчеты</T>
        </div>
        <div className="relative -mb-px flex h-[20px] w-[95px] items-center border-t border-r-2 border-l border-t-[#f4f4f4] border-r-[#808080] border-l-[#f4f4f4] bg-[#c0c0c0] pb-[2px] pl-[6px]">
          <T w={81}>!Заказ на склад</T>
        </div>
      </div>
      <div className="flex min-h-0 flex-1 flex-col border-l border-[#e4e4e4]">
        <ReportToolbar />
        <Viewer />
        <div className="mt-[2px] ml-[3px] flex h-[23px] shrink-0 border border-black bg-linear-to-b from-[#f2f2f2] to-[#c0c0c0]">
          <div className="flex w-[111px] items-center pb-[2px] pl-[8px]">
            <T w={97}>Результат запроса</T>
          </div>
          <div className="-mt-px flex h-[21px] w-[106px] items-center border-r border-b border-l border-black bg-[#b4b4b4] pl-[3px]">
            <T w={78}>Заказ на склад</T>
            <svg viewBox="0 0 16 16" className="ml-[6px] h-4 w-4">
              <rect width="16" height="16" fill="#e88080" />
              <rect y="2" width="16" height="12" fill="#c81c1c" />
              <path d="M0 2h16v3H0z" fill="#e04444" />
              <path d="M4.500 4.500l7 7M11.500 4.500l-7 7" stroke="#d0d0d0" strokeWidth="2.600" />
            </svg>
          </div>
        </div>
        <div className="mt-[5px] ml-[6px] flex h-[18px] shrink-0 gap-[2px] pr-[3px]">
          <div className="flex w-[128px] items-center border border-[#808080] pt-[1px] pl-[1px]"><T w={107}>Записей возвращено</T></div>
          <div className="flex w-[52px] items-center border border-[#808080] pt-[1px] pl-[2px]"><T w={6}>1</T></div>
          <div className="flex-1 border border-[#808080]" />
        </div>
        <div className="flex-1 border-b border-[#808080]" />
      </div>
    </div>
  );
}

/* ---------- bottom bars ---------- */

const tasks: [string, string, number][] = [
  ["dots", "ГОЛЬФСТРИМ", 70],
  ["dse", "Номенклатура ДСЕ", 98],
  ["theme", "Темы", 27],
  ["request", "Заявки заказчиков", 98],
  ["service", "Номенклатурные группы", 128],
  ["agents", "Контрагенты", 69],
  ["svod", "Заявки на склад", 85],
  ["contract", "Ведение договоров", 101],
  ["request", "Заказы заказчиков", 99],
];

function Tasks() {
  return (
    <div className="flex h-[26px] shrink-0 items-center pl-[2px]">
      {tasks.map(([i, t, w], k) => (
        <div key={t} className="flex h-[22px] shrink-0 items-center border-r border-[#808080] pr-[6px]">
          <div className={k ? "ml-[5px] bg-white/80" : ""}><Icon n={i} className="opacity-75" /></div>
          <T w={w} className="ml-[3px] pt-[1px]">{t}</T>
        </div>
      ))}
      <div className="ml-[2px] flex h-[22px] w-[112px] items-center border border-black bg-[#cacaca] pl-[2px]">
        <div className="bg-white"><Icon n="svod" /></div>
        <T w={85} className="ml-[3px] pt-[1px]">Заказы на склад</T>
      </div>
    </div>
  );
}

function StatusBar() {
  const p = "flex shrink-0 items-center justify-center border border-[#808080] pt-[1px] ";
  return (
    <div className="flex h-[18px] shrink-0 gap-[2px] overflow-hidden">
      <div className="flex w-[781px] shrink-0 items-center border border-l-0 border-[#808080] pl-[1px]"><Icon n="bubble" /></div>
      <div className={p + "w-[102px]"} />
      <div className={p + "w-[32px] text-[#8c8c8c]"}><T w={26}>CAPS</T></div>
      <div className={p + "w-[28px]"}><T w={22}>NUM</T></div>
      <div className={p + "w-[31px] text-[#8c8c8c]"}><T w={25}>SCRL</T></div>
      <div className={p + "w-[27px]"}><T w={21}>OVR</T></div>
      <div className="flex w-[242px] shrink-0 items-center border border-[#808080] pl-[1px]">
        <Icon n="dbAdd" />
        <T w={211} className="ml-[3px]">test2x64 - DM2013CRScenTEST - test_scen</T>
      </div>
      <div className="flex w-[24px] shrink-0 items-center border border-[#808080] pl-[1px]"><Icon n="note" /></div>
    </div>
  );
}

export default function App() {
  return (
    <div className="h-[990px] w-[1289px] overflow-hidden bg-white pt-[7px] pl-[7px] font-['DejaVu_Sans_Condensed','DejaVu_Sans',sans-serif] text-[11px] leading-[14px] text-black">
      <div className="flex h-[977px] w-[1275px] flex-col overflow-hidden bg-[#c0c0c0] shadow-[2px_2px_4px_1px_rgba(0,0,0,0.75)]">
        <TitleBar />
        <MenuBar />
        <MainToolbar />
        <div className="flex min-h-0 flex-1 pl-[1px]">
          <Sidebar />
          <Main />
        </div>
        <Tasks />
        <StatusBar />
        <div className="flex h-[6px] shrink-0 flex-col justify-end">
          <div className="h-px bg-[#e4e4e4]" />
          <div className="h-[3px] bg-[#c0c0c0]" />
          <div className="h-px bg-[#606060]" />
        </div>
      </div>
    </div>
  );
}
